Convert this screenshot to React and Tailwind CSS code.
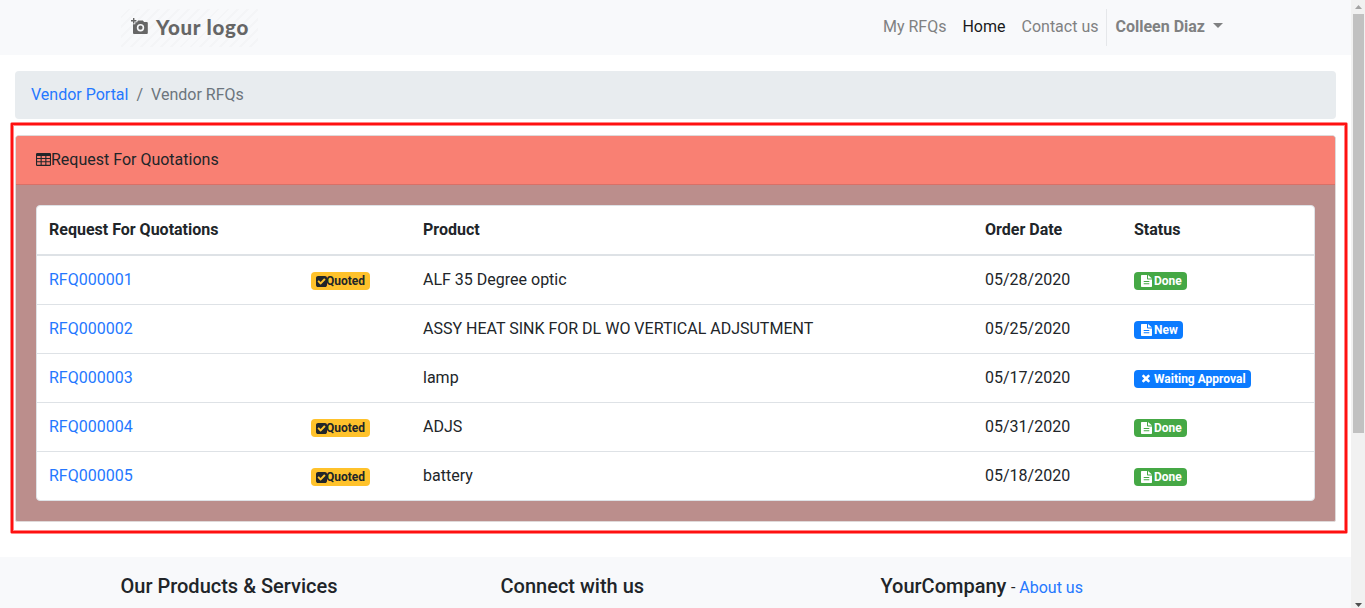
import React from "react";

const CHECK_PATH =
  "M813 1299l614-614q19-19 19-45t-19-45l-102-102q-19-19-45-19t-45 19l-467 467-211-211q-19-19-45-19t-45 19l-102 102q-19 19-19 45t19 45l358 358q19 19 45 19t45-19zm851-883v960q0 119-84.5 203.5t-203.5 84.5h-960q-119 0-203.5-84.5t-84.5-203.5v-960q0-119 84.5-203.5t203.5-84.5h960q119 0 203.5 84.5t84.5 203.5z";
const CLOSE_PATH =
  "M1490 1322q0 40-28 68l-136 136q-28 28-68 28t-68-28l-294-294-294 294q-28 28-68 28t-68-28l-136-136q-28-28-28-68t28-68l294-294-294-294q-28-28-28-68t28-68l136-136q28-28 68-28t68 28l294 294 294-294q28-28 68-28t68 28l136 136q28 28 28 68t-28 68l-294 294 294 294q28 28 28 68z";

function TableIcon() {
  return (
    <svg className="mb-0.5 h-[13px] w-[15px]" viewBox="0 0 15 13" fill="currentColor">
      <path
        fillRule="evenodd"
        d="M1.300 0h12.400A1.300 1.300 0 0 1 15 1.300v10.400a1.300 1.300 0 0 1-1.300 1.300H1.300A1.300 1.300 0 0 1 0 11.700V1.300A1.300 1.300 0 0 1 1.300 0zM1.100 3h3.500v2.100H1.100zM5.700 3h3.600v2.100H5.700zM10.400 3h3.500v2.100h-3.500zM1.100 6.100h3.500v2.200H1.100zM5.700 6.100h3.600v2.200H5.700zM10.400 6.100h3.500v2.200h-3.500zM1.100 9.300h3.500v2.500H1.100zM5.700 9.300h3.600v2.500H5.700zM10.400 9.300h3.500v2.500h-3.500z"
      />
    </svg>
  );
}

function QuotedBadge() {
  return (
    <span className="mt-0.5 flex h-[18px] w-[59px] items-center rounded bg-[#ffc22b] pl-[4.5px] text-xs leading-none font-bold text-[#212529]">
      <svg className="-mr-[0.5px] h-[11px] w-[11px] shrink-0" viewBox="128 128 1536 1536" fill="currentColor">
        <path d={CHECK_PATH} />
      </svg>
      Quoted
    </span>
  );
}

function StatusIcon({ waiting }) {
  if (waiting)
    return (
      <svg className="mr-[3px] h-3 w-2.5 shrink-0" viewBox="200 130 1408 1792" fill="currentColor">
        <path d={CLOSE_PATH} />
      </svg>
    );
  return (
    <svg className="mr-0.5 h-3 w-[11px] shrink-0" viewBox="0 0 11 12" fill="currentColor">
      <path
        fillRule="evenodd"
        d="M.700 0H6v3.800a.700.700 0 0 0 .700.700H11v6.800a.700.700 0 0 1-.700.700H.700a.700.700 0 0 1-.700-.700V.700A.700.700 0 0 1 .700 0zM7 0l4 3.600H7zM2.700 6h5.600v1H2.700zM2.700 8.300h5.600v1H2.700z"
      />
    </svg>
  );
}

const badgeStyles = {
  Done: "w-[53px] bg-[#45a845]",
  New: "w-[49px] bg-[#0b7bff]",
  "Waiting Approval": "w-[117px] bg-[#0b7bff]",
};

function StatusBadge({ status }) {
  return (
    <span
      className={
        "mt-0.5 flex h-[18px] items-center rounded pl-[7px] text-xs leading-none font-bold whitespace-nowrap text-white " +
        badgeStyles[status]
      }
    >
      <StatusIcon waiting={status === "Waiting Approval"} />
      {status}
    </span>
  );
}

const rows = [
  { id: "RFQ000001", quoted: true, product: "ALF 35 Degree optic", date: "05/28/2020", status: "Done" },
  { id: "RFQ000002", quoted: false, product: "ASSY HEAT SINK FOR DL WO VERTICAL ADJSUTMENT", date: "05/25/2020", status: "New" },
  { id: "RFQ000003", quoted: false, product: "lamp", date: "05/17/2020", status: "Waiting Approval" },
  { id: "RFQ000004", quoted: true, product: "ADJS", date: "05/31/2020", status: "Done" },
  { id: "RFQ000005", quoted: true, product: "battery", date: "05/18/2020", status: "Done" },
];

function Logo() {
  return (
    <a className="flex h-[38px] w-[137px] items-center bg-[repeating-linear-gradient(135deg,#f8f9fb_0px,#f8f9fb_5px,#f4f5f7_5px,#f4f5f7_7px)] pb-px pl-2.5 text-[#666]">
      <svg className="mb-px h-[17px] w-[17px] shrink-0" viewBox="0 0 17 17" fill="currentColor">
        <path d="M2 0h1.400v2H5.400v1.400H3.400v2H2v-2H0V2h2z" />
        <path
          fillRule="evenodd"
          d="M6.300 3.500 7.200 2.500h4.600l1.300 1.500H15.800a1 1 0 0 1 1 1v10a1 1 0 0 1-1 1H3a1 1 0 0 1-1-1V6.300h2.300v-2h2zM9.500 6a3.700 3.700 0 1 0 0 7.400 3.700 3.700 0 0 0 0-7.400zM9.500 7.600a2.100 2.100 0 1 1 0 4.200 2.100 2.100 0 0 1 0-4.200z"
        />
      </svg>
      <span className="mt-px ml-2 text-[20.500px] leading-none font-black tracking-[0.750px] whitespace-nowrap font-['Lato',sans-serif]">
        Your logo
      </span>
    </a>
  );
}

export default function App() {
  return (
    <div className="relative flex h-[608px] w-[1365px] overflow-hidden bg-white font-['Roboto',sans-serif] text-base leading-6 text-[#212529]">
      <div className="flex h-full w-[1351px] flex-col">
        <header className="flex h-[55px] shrink-0 items-center justify-between bg-[#f8f9fb] pr-[120px] pl-[121px]">
          <Logo />
          <nav className="flex h-[37px] items-center text-[#808182]">
            <a className="px-2 pb-0.5">My RFQs</a>
            <a className="px-2 pb-0.5 text-[#191a1b]">Home</a>
            <a className="px-2 pb-0.5">Contact us</a>
            <div className="flex h-full items-center border-l border-[#e5e7ea] px-2 pb-0.5">
              <b className="font-bold">Colleen Diaz</b>
              <svg className="mb-0.5 ml-2 h-[5px] w-2.5" viewBox="0 0 10 5" fill="currentColor">
                <path d="M0 0h10L5 5z" />
              </svg>
            </div>
          </nav>
        </header>

        <main className="flex h-[502px] shrink-0 flex-col pt-4 pr-[15px] pl-[15px]">
          <div className="flex h-12 shrink-0 items-center rounded bg-[#e8ecef] px-4">
            <a className="text-[#2578ff]">Vendor Portal</a>
            <span className="px-2 text-[#6c757d]">/</span>
            <span className="text-[#6c757d]">Vendor RFQs</span>
          </div>

          <section className="mt-4 flex h-[387px] flex-col overflow-hidden rounded-t rounded-b-[2px] border border-[#dfd9d9] bg-[#bb8e8c]">
            <div className="flex h-[49px] shrink-0 items-center border-b border-[#d87067] bg-[#f98073] pl-5">
              <TableIcon />
              <span>Request For Quotations</span>
            </div>
            <div className="p-5">
              <div className="overflow-hidden rounded border border-[#dee2e6] bg-white">
                <table className="w-full table-fixed border-separate border-spacing-0 text-left">
                  <colgroup>
                    <col className="w-[262px]" />
                    <col className="w-[112px]" />
                    <col className="w-[562px]" />
                    <col className="w-[149px]" />
                    <col />
                  </colgroup>
                  <thead>
                    <tr className="h-[50px]">
                      <th className="border-b-2 border-[#dee2e6] px-3 font-bold">Request For Quotations</th>
                      <th className="border-b-2 border-[#dee2e6]" />
                      <th className="border-b-2 border-[#dee2e6] px-3 font-bold">Product</th>
                      <th className="border-b-2 border-[#dee2e6] px-3 font-bold">Order Date</th>
                      <th className="border-b-2 border-[#dee2e6] px-3 font-bold">Status</th>
                    </tr>
                  </thead>
                  <tbody className="[&>tr:not(:last-child)>td]:border-b [&>tr:not(:last-child)>td]:border-[#dee2e6]">
                    {rows.map((r) => (
                      <tr key={r.id} className="h-[49px] last:h-12">
                        <td className="px-3 text-[#2578ff]">{r.id}</td>
                        <td className="px-3">{r.quoted && <QuotedBadge />}</td>
                        <td className="px-3">{r.product}</td>
                        <td className="px-3">{r.date}</td>
                        <td className="px-3">
                          <StatusBadge status={r.status} />
                        </td>
                      </tr>
                    ))}
                  </tbody>
                </table>
              </div>
            </div>
          </section>
        </main>

        <footer className="grid flex-1 grid-cols-[380px_380px_380px] bg-[#f8f9fb] pt-4 pl-[120.5px] text-xl leading-[26px] font-medium">
          <h5>Our Products &amp; Services</h5>
          <h5>Connect with us</h5>
          <h5>
            YourCompany
            <span className="ml-[0.5px] text-base font-normal">
              {" - "}
              <a className="text-[#2578ff]">About us</a>
            </span>
          </h5>
        </footer>
      </div>

      <aside className="flex w-3.5 flex-col items-center bg-[#f1f1f1]">
        <svg className="mt-[5px] h-1 w-[7px]" viewBox="0 0 7 4" fill="#a3a3a3">
          <path d="M3.500 0 7 4H0z" />
        </svg>
        <div className="mt-[5px] h-[419px] w-[11px] bg-[#c1c1c1]" />
        <svg className="mt-auto mb-px h-1 w-[7px]" viewBox="0 0 7 4" fill="#505050">
          <path d="M0 0h7L3.500 4z" />
        </svg>
      </aside>

      <div className="pointer-events-none absolute top-[122px] left-[10px] h-[412px] w-[1338px] rounded-[2px] border border-[#ff8585]">
        <div className="h-full w-full border-2 border-[#ff1010]">
          <div className="h-full w-full border border-[#ff8585]" />
        </div>
      </div>
    </div>
  );
}
